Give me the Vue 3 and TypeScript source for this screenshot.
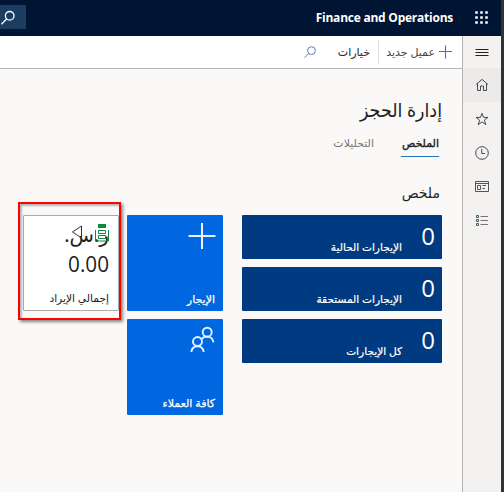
<script setup lang="ts">
interface CountTile {
  value: number
  label: string
}

const counts: CountTile[] = [
  { value: 0, label: 'الإيجارات الحالية' },
  { value: 0, label: 'الإيجارات المستحقة' },
  { value: 0, label: 'كل الإيجارات' },
]
const dots = [1.5, 6.5, 11.5]
</script>

<template>
  <div class="window" dir="rtl">
    <header class="top">
      <svg class="waffle" viewBox="0 0 13 13" fill="#fff">
        <template v-for="y in dots" :key="y">
          <rect v-for="x in dots" :key="x" :x="x - 1.3" :y="y - 1.3" width="2.6" height="2.6" rx=".5" />
        </template>
      </svg>
      <span class="brand" dir="ltr">Finance and Operations</span>
      <div class="search">
        <svg width="16" height="16" viewBox="0 0 16 16" fill="none" stroke="#fff" stroke-width="1.3">
          <circle cx="9.7" cy="6.8" r="4.3" /><path d="M6.6 10 1.4 15.2" />
        </svg>
      </div>
    </header>

    <div class="body">
      <nav class="rail">
        <span class="cell menu">
          <svg width="14" height="14" viewBox="0 0 14 14" stroke="#222" stroke-width="1.1"><path d="M.5 4.500h13M.5 7.500h13M.5 10.500h13" /></svg>
        </span>
        <span class="cell active">
          <svg width="14" height="14" viewBox="0 0 14 14" fill="none" stroke="#4a4a50"><path d="M1 6.500 7 1.400l6 5.100M2.500 5.500v7h3V8h3v4.500h3v-7" /></svg>
        </span>
        <span class="cell">
          <svg width="14" height="14" viewBox="0 0 14 14" fill="none" stroke="#4a4a50"><path d="m7 1.300 1.500 4.100h4.500L9.400 8.100l1.400 4.500L7 9.900l-3.800 2.700 1.400-4.500L1 5.400h4.500z" /></svg>
        </span>
        <span class="cell">
          <svg width="14" height="14" viewBox="0 0 14 14" fill="none" stroke="#4a4a50"><circle cx="7" cy="7" r="6.300" /><path d="M6.700 3v4.500H10" /></svg>
        </span>
        <span class="cell">
          <svg width="14" height="14" viewBox="0 0 14 14" fill="none" stroke="#55555a"><path d="M.5 1.500h13v10H.5zM.5 3.500h13M2.500 5.500h3v4h-3zM7.500 5.500h3.500M7.500 8.500h2.500" /></svg>
        </span>
        <span class="cell">
          <svg width="14" height="14" viewBox="0 0 14 14" fill="none"><path d="M1.500 1.500h2v2h-2zM1.500 5.500h2v2h-2zM1.500 9.500h2v2h-2z" stroke="#40605c" /><path d="M5.500 2.500H13M5.500 6.500H13M5.500 10.500H13" stroke="#75757a" /></svg>
        </span>
      </nav>

      <div class="content">
        <div class="actions">
          <span class="new">
            <svg width="14" height="14" viewBox="0 0 14 14" stroke="#3d72c4" stroke-width="1.1"><path d="M6.500 .5v13M0 6.500h13" /></svg>
            <span class="new-label">عميل جديد</span>
          </span>
          <span class="options">خيارات</span>
          <svg class="find" width="12" height="12" viewBox="0 0 12 12" fill="none" stroke="#6378bd"><circle cx="7.500" cy="4.600" r="3.900" /><path d="M4.800 7.400.5 11.700" /></svg>
        </div>

        <main>
          <h1>إدارة الحجز</h1>
          <div class="tabs">
            <span class="tab on">الملخص</span>
            <span class="tab">التحليلات</span>
          </div>
          <h2>ملخص</h2>

          <div class="tiles">
            <div class="column counts">
              <div v-for="tile in counts" :key="tile.label" class="count">
                <b>{{ tile.value }}</b>
                <span>{{ tile.label }}</span>
              </div>
            </div>
            <div class="column">
              <div class="square">
                <svg width="28" height="28" viewBox="0 0 28 28" stroke="#e8f1fd" stroke-width="2"><path d="M14 1v26M.5 14h27" /></svg>
                <span>الإيجار</span>
              </div>
              <div class="square">
                <svg width="28" height="28" viewBox="0 0 28 28" fill="none" stroke="#e8f1fd" stroke-width="1.900"><circle cx="19.200" cy="6.200" r="4.500" /><circle cx="9.500" cy="15.500" r="4.500" /><path d="M13.500 13.300c1-1.700 3-2.700 5.500-2.700 3.700 0 6 2.200 6.500 5.700M3.300 26c.5-3.800 2.800-5.800 6.200-5.800s5.700 2 6.200 5.800" /></svg>
                <span>كافة العملاء</span>
              </div>
            </div>
            <div class="square revenue">
              <div class="amount"><span class="currency">ر.س.</span><span class="number" dir="ltr">0.00</span></div>
              <span class="caption">إجمالي الإيراد</span>
              <svg class="glyph" width="40" height="18" viewBox="0 0 40 18" fill="none">
                <path d="M10.500 2v12L1.500 8z" stroke="#333" />
                <path d="M27 0h8v4h-8z" fill="#10893e" />
                <path d="M24.500 6v11h13V6M27.500 6.500h7v3h-7zM27.500 11.500h7v3h-7z" stroke="#10893e" />
              </svg>
              <div class="outline"></div>
            </div>
          </div>
        </main>
      </div>
    </div>
  </div>
</template>

<style>
body { margin: 0; overflow: hidden; }
</style>
<style scoped>
* { box-sizing: border-box; }
svg { display: block; flex: none; }
.window { width: 504px; height: 492px; border-right: 3px solid #333; background: #faf9f8; color: #222; font-family: "Noto Sans", "DejaVu Sans", sans-serif; display: flex; flex-direction: column; }
.top { height: 36px; flex: none; background: #001433; display: flex; align-items: center; padding-right: 13px; }
.waffle { width: 13px; height: 13px; margin-top: -2px; }
.brand { color: #fff; font: 700 12px/18px "Open Sans", sans-serif; letter-spacing: -.24px; margin-right: 22px; white-space: nowrap; }
.search { margin-right: auto; width: 26px; height: 24px; background: #1b3d62; display: flex; align-items: center; justify-content: flex-end; margin-top: -2px; }
.body { flex: 1; display: flex; }
.rail { width: 39px; flex: none; background: #f3f2f1; border-left: 1px solid #b5b4b3; }
.cell { height: 34px; display: flex; align-items: center; justify-content: center; }
.menu { height: 32px; }
.active { background: #edebe9; }
.content { flex: 1; min-width: 0; }
.actions { height: 33px; background: #fff; border-bottom: 1px solid #b5b4b3; display: flex; align-items: center; padding-right: 9px; font-size: 11px; white-space: nowrap; }
.new { display: flex; align-items: center; gap: 4px; width: 75px; height: 24px; border-left: 1px solid #e1dfdd; color: #444; }
.new-label, .options { position: relative; top: -1px; }
.options { margin-right: 8px; width: 30px; }
.find { margin-right: 24px; }
main { padding: 26px 20px 0 0; }
h1 { margin: 0; font-size: 19px; line-height: 30px; font-weight: 400; height: 38px; transform: scaleX(.92); transform-origin: right; }
.tabs { display: flex; gap: 27px; height: 24px; margin-right: 3px; }
.tab { font-size: 11px; line-height: 20px; height: 24px; color: #777; white-space: nowrap; }
.on { color: #222; border-bottom: 1px solid #2573bd; -webkit-text-stroke: .35px #222; width: 38px; }
h2 { margin: 24px 2px 0 0; font-size: 14px; line-height: 24px; height: 34px; font-weight: 400; }
.tiles { display: flex; }
.column { display: flex; flex-direction: column; gap: 8px; margin-left: 8px; }
.counts { margin-left: 19px; }
.count { width: 200px; height: 44px; border-radius: 1px; background: #003a80; color: #fff; display: flex; padding-right: 7px; }
.count b { font: 400 24px/42px "Open Sans", sans-serif; width: 33px; }
.count span { font-size: 10.6px; line-height: 18px; margin-top: 23px; -webkit-text-stroke: .2px #fff; }
.square { width: 96px; height: 96px; background: #0067e0; border-radius: 1px; color: #fff; padding: 7px 7px 4px; display: flex; flex-direction: column; justify-content: space-between; }
.square span { font-size: 11px; line-height: 16px; white-space: nowrap; }
.square > span { padding-right: 1px; -webkit-text-stroke: .25px; }
.revenue { position: relative; background: #fff; border: 1px solid #aaa; color: #222; padding: 5px 9px 4px; }
.revenue .caption { font-size: 10.7px; padding: 0; -webkit-text-stroke: 0; }
.amount { display: flex; flex-direction: column; }
.amount .currency { font-size: 20px; line-height: 28px; }
.amount .number { font: 400 22px/28px "Open Sans", sans-serif; text-align: right; transform: scaleX(.94); transform-origin: right; }
.glyph { position: absolute; left: 47px; top: 8px; }
.outline { position: absolute; left: -6px; top: -14px; width: 103px; height: 118px; border: 2px solid #f00; box-shadow: 2px 2px 3px #0007, inset 2px 2px 2px #0004; }
</style>
